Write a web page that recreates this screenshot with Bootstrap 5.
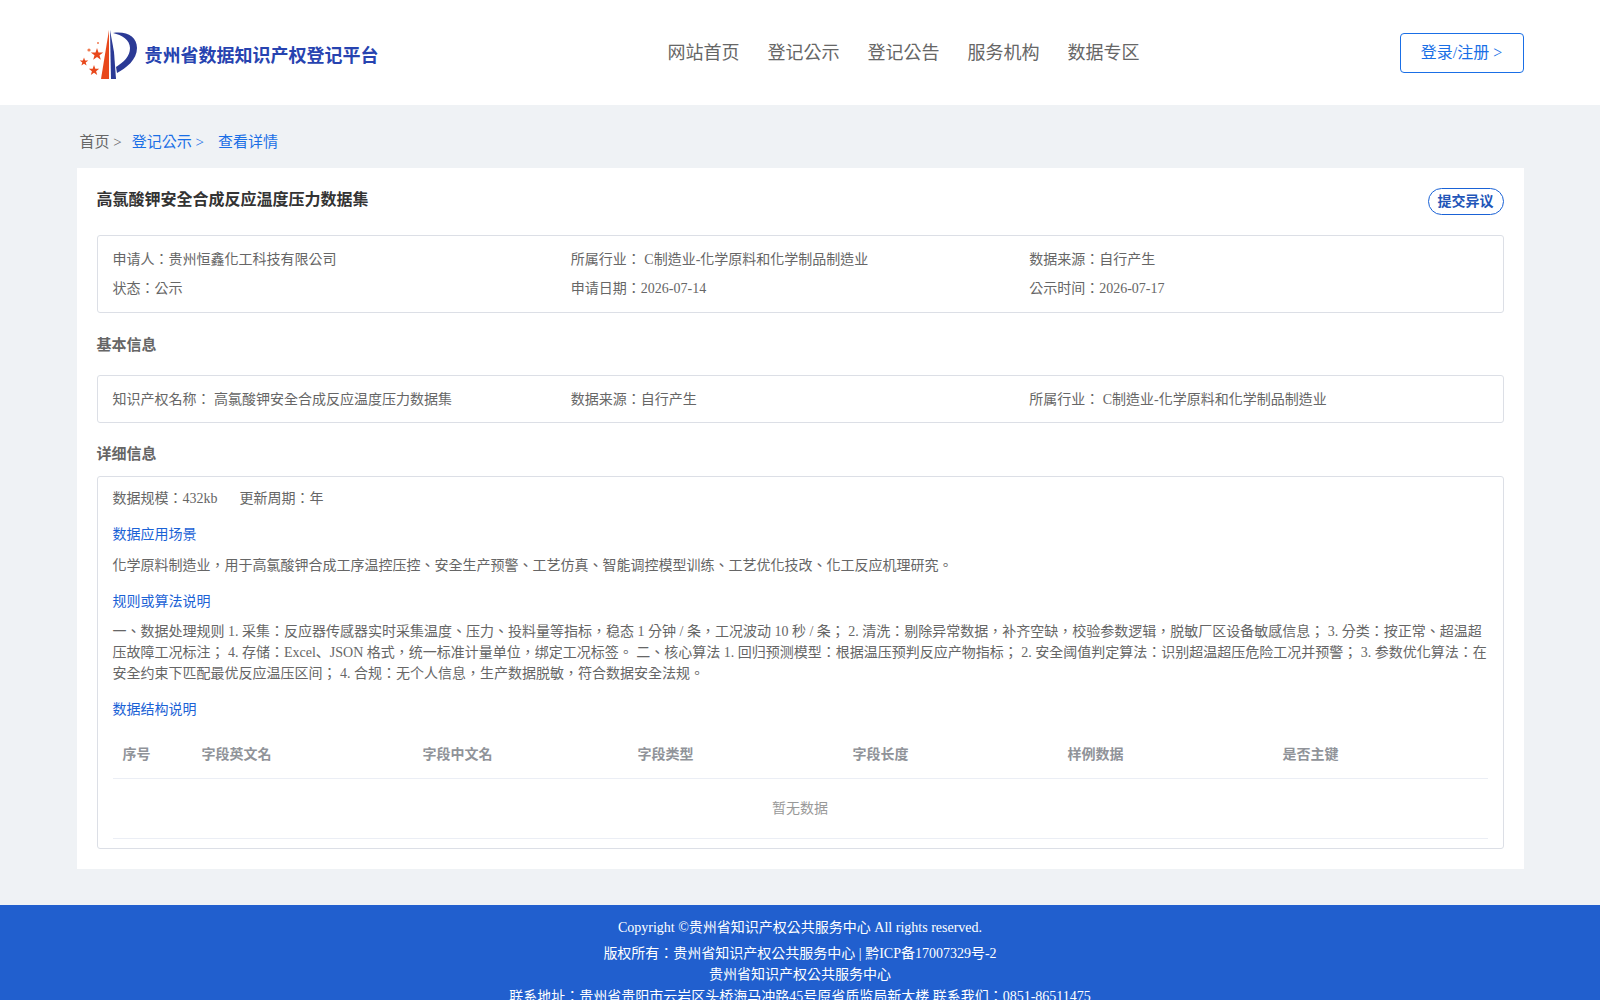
<!DOCTYPE html>
<html lang="zh-TW">
<head>
    <meta charset="UTF-8">
    <meta name="viewport" content="width=device-width, initial-scale=1.0">
    <title>贵州省数据知识产权登记平台</title>
    <link href="https://cdn.jsdelivr.net/npm/bootstrap@5.3.0/dist/css/bootstrap.min.css" rel="stylesheet">
    <style>
        body {
            background-color: #eff2f5;
            font-family: "Liberation Serif", "Noto Sans CJK SC", serif;
            font-size: 14px;
            line-height: 21px;
            color: #666;
        }
        .page-wrap { width: 1447px; margin: 0 auto; }
        .site-header { background: #fff; height: 105px; }
        .site-header .page-wrap { height: 105px; }
        .brand-box { width: 330px; padding-top: 4px; }
        .brand-name { color: #2743b0; font-size: 18px; font-weight: 700; white-space: nowrap; margin-left: 4px; font-family: "Noto Sans CJK SC", sans-serif; }
        .main-menu { gap: 28px; margin-left: 261px; }
        .main-menu a { color: #666; font-size: 18px; text-decoration: none; line-height: 26px; }
        .login-btn { width: 124px; height: 40px; font-size: 16px; color: #1a6fe6; border: 1px solid #1a6fe6; background: #fff; border-radius: 4px; padding: 0; }
        .crumbs { height: 63px; padding-left: 3px; padding-top: 12px; font-size: 15px; color: #666; }
        .crumbs a { color: #1a6fe6; text-decoration: none; margin-left: 10px; }
        .crumbs a + a { margin-left: 14px; }
        .detail-card { background: #fff; padding: 20px; height: 701px; }
        .detail-title { font-size: 16px; font-weight: 700; color: #333; margin: 0; line-height: 24px; }
        .report-btn { width: 76px; height: 27px; padding: 0; font-size: 14px; font-weight: 700; color: #2155b8; border: 1px solid #1a62d6; border-radius: 13.5px; background: #fff; }
        .info-box { border: 1px solid #dcdfe6; border-radius: 3px; padding: 0 15px; }
        .summary-box { margin-top: 20px; height: 78px; padding-top: 13px; }
        .summary-box .row + .row { margin-top: 8px; }
        .base-box { height: 48px; padding-top: 12.5px; }
        .section-label { font-size: 15px; font-weight: 700; color: #666; margin: 0; line-height: 21px; }
        .label-base { margin-top: 22px; margin-bottom: 19px; }
        .label-detail { margin-top: 21px; margin-bottom: 11px; }
        .more-box { height: 373px; padding-top: 11px; }
        .more-box p { margin: 0; }
        .more-box .blue-head { color: #1a62d6; margin-top: 15px; margin-bottom: 9.5px; }
        .cycle-text { margin-left: 22px; }
        .field-table { table-layout: fixed; width: 1375px; margin-top: 11px; color: #999; }
        .field-table th { font-weight: 700; color: #909399; height: 47px; padding: 0 10px; vertical-align: middle; border-bottom: 1px solid #ebeef5; }
        .field-table td { height: 60px; text-align: center; color: #999; vertical-align: middle; border-bottom: 1px solid #ebeef5; }
        .col-seq { width: 79px; }
        .col-en { width: 221px; }
        .col-rest { width: 215px; }
        .site-footer { background: #215fce; color: #fff; margin-top: 36px; padding-top: 12px; padding-bottom: 14px; text-align: center; line-height: 21.5px; }
        .site-footer p { margin: 0; }
        .site-footer .copy-line { margin-bottom: 4px; }
    </style>
</head>
<body>
    <header class="site-header">
        <div class="page-wrap d-flex align-items-center">
            <div class="brand-box d-flex align-items-center flex-shrink-0">
                <svg width="64" height="52" viewBox="77 27 64 52">
                    <polygon points="109,28 109,77 101,77" fill="#e8481c"/>
                    <polygon points="110,28 111,77 116,77 114,50" fill="#2b3a95"/>
                    <path d="M113 31 C127 29 137 35 137 46 C137 58 126 66 117 71 L116 65 C124 60 130 54 130 46 C130 38 122 33 113 31 Z" fill="#2b3a95"/>
                    <polygon points="97,46 98.5,50.4 103.2,50.5 99.5,53.3 100.8,57.8 97,55.1 93.2,57.8 94.5,53.3 90.8,50.5 95.5,50.4" fill="#e8481c"/>
                    <polygon points="84,55.5 85.1,58.5 88.3,58.6 85.7,60.6 86.6,63.6 84,61.8 81.4,63.6 82.3,60.6 79.7,58.6 82.9,58.5" fill="#e8481c"/>
                    <polygon points="94,63 95.3,66.7 99.2,66.8 96.1,69.2 97.2,73 94,70.7 90.8,73 91.9,69.2 88.8,66.8 92.7,66.7" fill="#e8481c"/>
                    <circle cx="89" cy="48" r="1.6" fill="#ef7a50"/>
                    <circle cx="98" cy="41" r="1" fill="#ef7a50"/>
                </svg>
                <span class="brand-name">贵州省数据知识产权登记平台</span>
            </div>
            <nav class="main-menu d-flex flex-grow-1">
                <a href="#">网站首页</a>
                <a href="#">登记公示</a>
                <a href="#">登记公告</a>
                <a href="#">服务机构</a>
                <a href="#">数据专区</a>
            </nav>
            <button class="btn login-btn flex-shrink-0" type="button">登录/注册 &gt;</button>
        </div>
    </header>

    <main class="page-wrap">
        <div class="crumbs d-flex align-items-center">
            <span>首页 &gt;</span>
            <a href="#">登记公示 &gt;</a>
            <a href="#">查看详情</a>
        </div>
        <section class="detail-card">
            <div class="d-flex justify-content-between align-items-start">
                <h1 class="detail-title">高氯酸钾安全合成反应温度压力数据集</h1>
                <button class="btn report-btn" type="button">提交异议</button>
            </div>
            <div class="info-box summary-box">
                <div class="row g-0">
                    <div class="col-4">申请人：贵州恒鑫化工科技有限公司</div>
                    <div class="col-4">所属行业： C制造业-化学原料和化学制品制造业</div>
                    <div class="col-4">数据来源：自行产生</div>
                </div>
                <div class="row g-0">
                    <div class="col-4">状态：公示</div>
                    <div class="col-4">申请日期：2026-07-14</div>
                    <div class="col-4">公示时间：2026-07-17</div>
                </div>
            </div>
            <h2 class="section-label label-base">基本信息</h2>
            <div class="info-box base-box">
                <div class="row g-0">
                    <div class="col-4">知识产权名称： 高氯酸钾安全合成反应温度压力数据集</div>
                    <div class="col-4">数据来源：自行产生</div>
                    <div class="col-4">所属行业： C制造业-化学原料和化学制品制造业</div>
                </div>
            </div>
            <h2 class="section-label label-detail">详细信息</h2>
            <div class="info-box more-box">
                <p>数据规模：432kb<span class="cycle-text">更新周期：年</span></p>
                <p class="blue-head">数据应用场景</p>
                <p>化学原料制造业，用于高氯酸钾合成工序温控压控、安全生产预警、工艺仿真、智能调控模型训练、工艺优化技改、化工反应机理研究。</p>
                <p class="blue-head">规则或算法说明</p>
                <p>一、数据处理规则 1. 采集：反应器传感器实时采集温度、压力、投料量等指标，稳态 1 分钟 / 条，工况波动 10 秒 / 条； 2. 清洗：剔除异常数据，补齐空缺，校验参数逻辑，脱敏厂区设备敏感信息； 3. 分类：按正常、超温超压故障工况标注； 4. 存储：Excel、JSON 格式，统一标准计量单位，绑定工况标签。 二、核心算法 1. 回归预测模型：根据温压预判反应产物指标； 2. 安全阈值判定算法：识别超温超压危险工况并预警； 3. 参数优化算法：在安全约束下匹配最优反应温压区间； 4. 合规：无个人信息，生产数据脱敏，符合数据安全法规。</p>
                <p class="blue-head">数据结构说明</p>
                <table class="field-table">
                    <colgroup>
                        <col class="col-seq"><col class="col-en"><col class="col-rest"><col class="col-rest"><col class="col-rest"><col class="col-rest"><col class="col-rest">
                    </colgroup>
                    <thead>
                        <tr>
                            <th>序号</th><th>字段英文名</th><th>字段中文名</th><th>字段类型</th><th>字段长度</th><th>样例数据</th><th>是否主键</th>
                        </tr>
                    </thead>
                    <tbody>
                        <tr><td colspan="7">暂无数据</td></tr>
                    </tbody>
                </table>
            </div>
        </section>
    </main>

    <footer class="site-footer">
        <p class="copy-line">Copyright ©贵州省知识产权公共服务中心 All rights reserved.</p>
        <p>版权所有：贵州省知识产权公共服务中心 | 黔ICP备17007329号-2</p>
        <p>贵州省知识产权公共服务中心</p>
        <p>联系地址：贵州省贵阳市云岩区头桥海马冲路45号原省质监局新大楼 联系我们：0851-86511475</p>
    </footer>

    <script src="https://cdn.jsdelivr.net/npm/bootstrap@5.3.0/dist/js/bootstrap.bundle.min.js"></script>
</body>
</html>
